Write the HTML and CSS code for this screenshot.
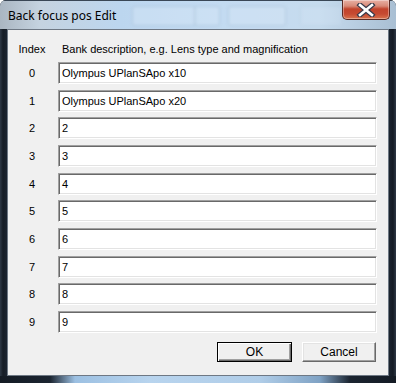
FILE: index.html
```html
<!DOCTYPE html>
<html lang="en">
<head>
    <meta charset="UTF-8">
    <title>Back focus pos Edit</title>
    <link rel="stylesheet" href="styles.css">
</head>
<body>
    <div class="window">
        <div class="titlebar">
            <div class="ghosts">
                <span class="ghost g1"></span>
                <span class="ghost g2"></span>
                <span class="ghost g3"></span>
                <span class="ghost g4"></span>
            </div>
            <span class="title">Back focus pos Edit</span>
            <div class="closeBtn">
                <svg width="20" height="14" viewBox="0 0 20 14">
                    <path d="M4 2 L16 12 M16 2 L4 12" stroke="#3a3a4a" stroke-width="5" stroke-linecap="square"/>
                    <path d="M4 2 L16 12 M16 2 L4 12" stroke="#ffffff" stroke-width="2.6" stroke-linecap="square"/>
                </svg>
            </div>
        </div>
        <div class="middle">
            <div class="sideFrame"></div>
            <div class="client">
                <div class="header">
                    <span class="idx">Index</span>
                    <span class="desc">Bank description, e.g. Lens type and magnification</span>
                </div>
                <div class="rows">
                    <div class="row"><span class="idx">0</span><div class="edit">Olympus UPlanSApo x10</div></div>
                    <div class="row"><span class="idx">1</span><div class="edit">Olympus UPlanSApo x20</div></div>
                    <div class="row"><span class="idx">2</span><div class="edit">2</div></div>
                    <div class="row"><span class="idx">3</span><div class="edit">3</div></div>
                    <div class="row"><span class="idx">4</span><div class="edit">4</div></div>
                    <div class="row"><span class="idx">5</span><div class="edit">5</div></div>
                    <div class="row"><span class="idx">6</span><div class="edit">6</div></div>
                    <div class="row"><span class="idx">7</span><div class="edit">7</div></div>
                    <div class="row"><span class="idx">8</span><div class="edit">8</div></div>
                    <div class="row"><span class="idx">9</span><div class="edit">9</div></div>
                </div>
                <div class="buttons">
                    <div class="btn default">OK</div>
                    <div class="btn cancel">Cancel</div>
                </div>
            </div>
            <div class="sideFrame right"></div>
        </div>
        <div class="bottomFrame"></div>
    </div>
</body>
</html>
```

FILE: styles.css
```css
body{
    margin: 0;
    padding: 0;
    background: #ffffff;
}
.window{
    width: 396px;
    height: 383px;
    display: flex;
    flex-direction: column;
    background: #1b2430;
    border-radius: 6px 6px 0 0;
    overflow: hidden;
    font-family: "Liberation Sans", Arial, sans-serif;
}
.titlebar{
    height: 29px;
    position: relative;
    background: linear-gradient(90deg, #aab6c2 0px, #c5d3e0 40px, #bcd6ef 120px, #c3dbf1 220px, #c6dbee 320px, #a9bfd3 396px);
    border-top: 1px solid #3a4756;
    box-sizing: border-box;
}
.ghosts{
    position: absolute;
    left: 0;
    top: 0;
    width: 396px;
    height: 29px;
    filter: blur(1.5px);
}
.ghost{
    position: absolute;
    top: 5px;
    height: 18px;
    background: rgba(220,234,248,0.35);
    border: 1px solid rgba(130,160,190,0.35);
    border-radius: 2px;
}
.g1{ left: 132px; width: 62px; }
.g2{ left: 194px; width: 24px; }
.g3{ left: 228px; width: 56px; }
.g4{ left: 300px; width: 40px; background: rgba(220,234,248,0.2); border-color: rgba(150,175,200,0.2); }
.title{
    position: absolute;
    left: 8px;
    top: 7px;
    font-family: "Noto Sans", "Liberation Sans", sans-serif;
    font-size: 12px;
    line-height: 16px;
    color: #000000;
}
.closeBtn{
    position: absolute;
    left: 342px;
    top: -1px;
    width: 46px;
    height: 19px;
    border: 1px solid #5a2a24;
    border-top: none;
    border-radius: 0 0 5px 5px;
    background: linear-gradient(180deg, #e8b0a4 0px, #d88a78 6px, #c2432c 9px, #c64a32 14px, #d9744e 19px);
    display: flex;
    align-items: center;
    justify-content: center;
    box-shadow: inset 0 0 0 1px rgba(255,255,255,0.35);
}
.middle{
    display: flex;
    height: 347px;
}
.sideFrame{
    width: 7px;
    background: linear-gradient(90deg, #2e3946 0px, #161d26 3px, #1b2430 7px);
}
.sideFrame.right{
    background: linear-gradient(90deg, #1b2430 0px, #141b24 4px, #2e3946 7px);
}
.client{
    width: 380px;
    height: 345px;
    border: 1px solid #6e7884;
    background: #f0f0f0;
    display: flex;
    flex-direction: column;
    font-size: 11px;
    color: #000000;
}
.header{
    display: flex;
    align-items: center;
    height: 13px;
    margin-top: 12px;
}
.idx{
    width: 32px;
    margin-left: 8px;
    text-align: center;
    flex-shrink: 0;
}
.desc{
    margin-left: 14px;
}
.rows{
    margin-top: 7px;
    display: flex;
    flex-direction: column;
    gap: 5.67px;
}
.row{
    display: flex;
    align-items: center;
    height: 22px;
}
.edit{
    margin-left: 10px;
    width: 319px;
    height: 22px;
    box-sizing: border-box;
    background: #ffffff;
    border-top: 1px solid #a0a0a0;
    border-left: 1px solid #a0a0a0;
    border-right: 1px solid #ffffff;
    border-bottom: 1px solid #ffffff;
    box-shadow: inset 1px 1px 0 #696969, inset -1px -1px 0 #e3e3e3;
    padding: 0 0 0 3px;
    line-height: 20px;
    white-space: nowrap;
}
.buttons{
    display: flex;
    justify-content: flex-end;
    gap: 10px;
    margin-top: 9px;
    padding-right: 12px;
}
.btn{
    height: 20px;
    box-sizing: border-box;
    background: #f0f0f0;
    text-align: center;
    line-height: 18px;
    font-size: 12px;
}
.btn.default{
    width: 75px;
    border: 1px solid #000000;
    box-shadow: inset 1px 1px 0 #ffffff, inset -1px -1px 0 #696969, inset -2px -2px 0 #a0a0a0;
}
.btn.cancel{
    width: 74px;
    border-top: 1px solid #ffffff;
    border-left: 1px solid #ffffff;
    border-right: 1px solid #696969;
    border-bottom: 1px solid #696969;
    box-shadow: inset -1px -1px 0 #a0a0a0, inset 1px 1px 0 #e3e3e3;
}
.bottomFrame{
    height: 7px;
    background: linear-gradient(90deg, #141b24 0px, #1b2430 50px, #9cc0e2 75px, #b8d4ee 150px, #b0cde8 260px, #7fa2c4 320px, #1b2430 350px, #141b24 396px);
}
```
